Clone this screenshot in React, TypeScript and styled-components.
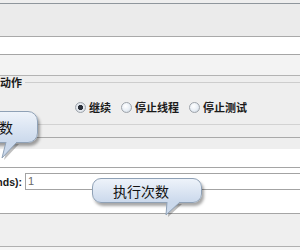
import React from "react";
import styled, { createGlobalStyle } from "styled-components";

const Global = createGlobalStyle`
  html, body { margin: 0; padding: 0; background: #efefef; overflow: hidden; }
  #root { width: 300px; height: 250px; }
`;

const Root = styled.div`
  position: relative;
  width: 300px;
  height: 250px;
  overflow: hidden;
  display: flex;
  flex-direction: column;
  background: #f3f3f3;
  font-family: "Noto Sans CJK SC", "Liberation Sans", sans-serif;
`;

const Band = styled.div<{ $h: number; $bg: string; $line?: string }>`
  flex: none;
  height: ${(p) => p.$h}px;
  background: ${(p) => p.$bg};
  border-bottom: 1px solid ${(p) => p.$line ?? "transparent"};
`;

const Section = styled.div`
  flex: none;
  height: 61px;
  background: #eeeeee;
  border-bottom: 1px solid #a9a9a9;
  display: flex;
  flex-direction: column;
`;

const Group = styled.div`
  height: 48px;
  border-bottom: 1px solid #d2d2d2;
  display: flex;
  flex-direction: column;
`;

const TitleRow = styled.div`
  height: 13px;
  display: flex;
  align-items: center;
  gap: 3px;
  margin-top: 0px;
`;

const Title = styled.span`
  font-size: 11px;
  font-weight: 700;
  color: #1a1a1a;
  line-height: 13px;
  white-space: nowrap;
`;

const Rule = styled.div`
  flex: 1;
  height: 1px;
  background: #cdcdcd;
`;

const RadioRow = styled.div`
  display: flex;
  align-items: center;
  gap: 10px;
  padding-left: 75px;
  margin-top: 12px;
`;

const RadioItem = styled.label`
  display: flex;
  align-items: center;
  gap: 3px;
  font-size: 11px;
  font-weight: 700;
  color: #1a1a1a;
  line-height: 13px;
`;

const RadioDot = styled.span<{ $on?: boolean }>`
  width: 11px;
  height: 11px;
  box-sizing: border-box;
  border-radius: 50%;
  border: 1px solid #9ea4ab;
  background: ${(p) =>
    p.$on
      ? "radial-gradient(circle, #2a2f38 0 2.4px, #e9edf2 2.9px, #c9d0d8 100%)"
      : "radial-gradient(circle at 40% 35%, #ffffff 0, #e8eef5 55%, #c3ccd6 100%)"};
`;

const Field = styled.div`
  flex: none;
  height: 46px;
  background: #ffffff;
  border-bottom: 1px solid #a5a5a5;
  display: flex;
  align-items: flex-start;
  padding-top: 5px;
  box-sizing: border-box;
`;

const LabelClip = styled.div`
  width: 25px;
  overflow: hidden;
  display: flex;
  justify-content: flex-end;
  height: 17px;
  align-items: center;
`;

const LabelText = styled.span`
  font-family: "Liberation Sans", sans-serif;
  font-size: 10.5px;
  font-weight: 700;
  color: #1a1a1a;
  white-space: nowrap;
  padding-right: 3px;
`;

const Input = styled.div`
  flex: 1;
  margin-right: -10px;
  height: 17px;
  box-sizing: border-box;
  border: 1px solid #a3a3a3;
  border-right: none;
  background: #fff;
  font-family: "Liberation Sans", sans-serif;
  font-size: 11px;
  color: #6a6a6a;
  padding-left: 2px;
  line-height: 15px;
`;

const Bubble = styled.div<{ $left: number; $top: number; $w: number; $h: number; $r: number }>`
  position: absolute;
  left: ${(p) => p.$left}px;
  top: ${(p) => p.$top}px;
  width: ${(p) => p.$w}px;
  height: ${(p) => p.$h}px;
  box-sizing: border-box;
  border: 1px solid #8fa1b6;
  border-radius: ${(p) => p.$r}px;
  background: linear-gradient(#eef3fa, #cbd9ec);
  box-shadow: 2px 3px 3px rgba(0, 0, 0, 0.35);
  display: flex;
  align-items: center;
`;

const BubbleText = styled.span<{ $pad: number; $end?: boolean }>`
  flex: 1;
  font-size: 14px;
  color: #111;
  line-height: 16px;
  text-align: ${(p) => (p.$end ? "right" : "left")};
  padding-left: ${(p) => (p.$end ? 0 : p.$pad)}px;
  padding-right: ${(p) => (p.$end ? p.$pad : 0)}px;
  white-space: nowrap;
`;

const Tail = styled.svg`
  position: absolute;
  left: 0;
  top: 0;
  overflow: visible;
  pointer-events: none;
`;

function BubbleTail({ d }: { d: string }) {
  return (
    <Tail width="1" height="1">
      <path d={d} fill="rgba(0,0,0,0.25)" transform="translate(2,2)" />
      <path d={d} fill="#cbd9ec" stroke="#8fa1b6" strokeWidth="1" />
    </Tail>
  );
}

export default function App() {
  return (
    <>
      <Global />
      <Root>
        <Band $h={3} $bg="#eeeeee" $line="#8f969c" />
        <Band $h={32} $bg="#ebebeb" $line="#a9a9a9" />
        <Band $h={17} $bg="#ffffff" $line="#a5a5a5" />
        <Band $h={20} $bg="#f3f3f3" $line="#b3b3b3" />
        <Section>
          <Group>
            <TitleRow>
              <Title>动作</Title>
              <Rule />
            </TitleRow>
            <RadioRow>
              <RadioItem>
                <RadioDot $on />
                继续
              </RadioItem>
              <RadioItem>
                <RadioDot />
                停止线程
              </RadioItem>
              <RadioItem>
                <RadioDot />
                停止测试
              </RadioItem>
            </RadioRow>
          </Group>
        </Section>
        <Band $h={10} $bg="#eeeeee" />
        <Band $h={18} $bg="#ffffff" $line="#a5a5a5" />
        <Field>
          <LabelClip>
            <LabelText>Ramp-Up Period (in seconds):</LabelText>
          </LabelClip>
          <Input>1</Input>
        </Field>
        <Band $h={32} $bg="#efefef" $line="#b0b0b0" />
        <Band $h={5} $bg="#f5f5f5" />

        <Bubble $left={-30} $top={111} $w={68} $h={32} $r={10}>
          <BubbleText $pad={24} $end>
            数
          </BubbleText>
          <BubbleTail d="M 35 30 L 31 46 L 46 30" />
        </Bubble>
        <Bubble $left={92} $top={178} $w={110} $h={25} $r={9}>
          <BubbleText $pad={20}>执行次数</BubbleText>
          <BubbleTail d="M 74 23 L 73 36 L 87 23" />
        </Bubble>
      </Root>
    </>
  );
}
